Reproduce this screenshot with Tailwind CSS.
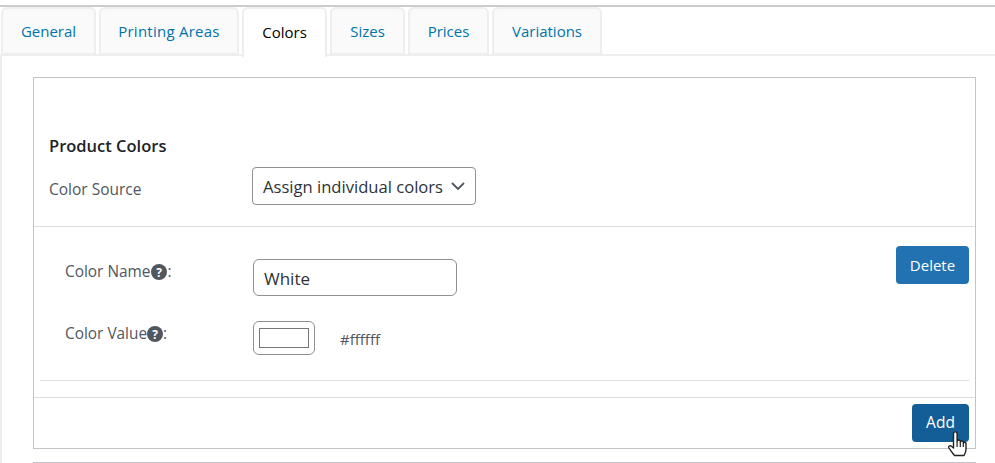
<!DOCTYPE html>
<html lang="en">
  <head>
    <meta charset="UTF-8" />
    <title>Colors</title>
    <script src="https://cdn.jsdelivr.net/npm/@tailwindcss/browser@4"></script>
  </head>
  <body class="bg-white h-[463px] w-[995px] overflow-hidden font-['Open_Sans',sans-serif] text-[#50575e]">
    <div class="mt-[5px] border-t-2 border-[#ccc] h-[458px] overflow-hidden">
      <nav class="flex pl-[1px] gap-[3px] h-[48px] relative z-10 text-[15px] text-[#0073aa]">
        <a class="w-[95px] h-[48px] pt-[1px] flex items-center justify-center bg-[#fafafa] border-2 border-[#eee] rounded-t-md">General</a>
        <a class="w-[140px] h-[48px] pt-[1px] flex items-center justify-center bg-[#fafafa] border-2 border-[#eee] rounded-t-md tracking-[0.25px]">Printing Areas</a>
        <a class="w-[85px] h-[50px] pb-[1px] flex items-center justify-center bg-white border-2 border-b-0 border-[#eee] rounded-t-md text-black">Colors</a>
        <a class="w-[75px] h-[48px] pt-[1px] flex items-center justify-center bg-[#fafafa] border-2 border-[#eee] rounded-t-md">Sizes</a>
        <a class="w-[81px] h-[48px] pt-[1px] flex items-center justify-center bg-[#fafafa] border-2 border-[#eee] rounded-t-md">Prices</a>
        <a class="w-[110px] h-[48px] pt-[1px] flex items-center justify-center bg-[#fafafa] border-2 border-[#eee] rounded-t-md">Variations</a>
      </nav>
      <div class="border-t-2 border-l-2 border-[#eee] pl-[31px] pr-[19px] pt-[21px] -mt-[1px] h-[411px]">
        <section class="border border-[#c3c4c7] h-[372px] flex flex-col">
          <div class="h-[149px] border-b border-[#ddd] pl-[15px] pt-[57px]">
            <h2 class="text-[16.500px] leading-[22px] font-semibold text-[#1d2327]">Product Colors</h2>
            <div class="flex items-center mt-[10px]">
              <label class="w-[203px] text-[15.500px] pt-[7px]">Color Source</label>
              <div class="w-[224px] h-[38px] border border-[#8c8f94] rounded flex items-center justify-between pl-[10px] pr-[10px] pt-[2px] text-[16.600px] text-[#2c3338]">
                Assign individual colors
                <svg class="w-[14px] h-[14px] -mt-[2px]" viewBox="0 0 14 14" fill="none" stroke="#50575e" stroke-width="1.8"><path d="M1 4l6 6 6-6" /></svg>
              </div>
            </div>
          </div>
          <div class="mx-[6px] h-[154px] border-b border-[#ddd] flex justify-between">
            <div class="pl-[25px] pt-[32px]">
              <div class="flex">
                <label class="w-[188px] text-[15.400px] leading-[24px] pt-[1px]">
                  <span class="flex items-center">Color Name<svg class="w-[16px] h-[16px] ml-[1px]" viewBox="0 0 16 16"><circle cx="8" cy="8" r="8" fill="#50575e" /><text x="8" y="12.5" text-anchor="middle" font-size="12" font-weight="700" fill="#fff">?</text></svg>:</span>
                </label>
                <div class="w-[204px] h-[37px] border border-[#8c8f94] rounded-md flex items-center pl-[10px] pt-[2px] text-[17px] text-[#2c3338]">White</div>
              </div>
              <div class="flex mt-[25px]">
                <label class="w-[188px] text-[15.400px] leading-[24px] pt-[1px]">
                  <span class="flex items-center">Color Value<svg class="w-[16px] h-[16px]" viewBox="0 0 16 16"><circle cx="8" cy="8" r="8" fill="#50575e" /><text x="8" y="12.5" text-anchor="middle" font-size="12" font-weight="700" fill="#fff">?</text></svg>:</span>
                </label>
                <div class="w-[62px] h-[34px] border border-[#8c8f94] rounded-md flex items-center justify-center">
                  <div class="w-[50px] h-[20px] border border-[#777] bg-white"></div>
                </div>
                <span class="ml-[25px] mt-[6px] text-[15px] leading-[24px]">#ffffff</span>
              </div>
            </div>
            <button class="mt-[19px] w-[73px] h-[38px] bg-[#2271b1] rounded text-white text-[15px]">Delete</button>
          </div>
          <div class="mt-[16px] border-t border-[#ddd] flex-1 flex justify-end pr-[6px] pt-[6px]">
            <button class="w-[57px] h-[38px] bg-[#135e96] rounded text-white text-[15.500px]">Add</button>
          </div>
        </section>
        <div class="mt-[13px] border-t border-[#c3c4c7]"></div>
      </div>
    </div>
    <svg class="absolute left-[948px] top-[431px] w-[19px] h-[26px]" viewBox="0 0 19 26"><path d="M5.500 2.500c0-2.200 3.600-2.200 3.600 0v7.500c0-1.400 3.200-1.400 3.200 0v1c0-1.300 3-1.300 3 0v1c0-1.100 2.700-1 2.700.5V18c0 3-1 4.500-2 6.500H6.500C5 22.500 2.500 19.500 1 17c-1-1.800 1-3 2.500-1.800L5.500 17z" fill="#fff" stroke="#222" stroke-width="1.400" stroke-linejoin="round" /><path d="M9.100 10v6M12.300 11v5M15.300 12v4" stroke="#222" stroke-width="1.200" fill="none" /></svg>
  </body>
</html>
